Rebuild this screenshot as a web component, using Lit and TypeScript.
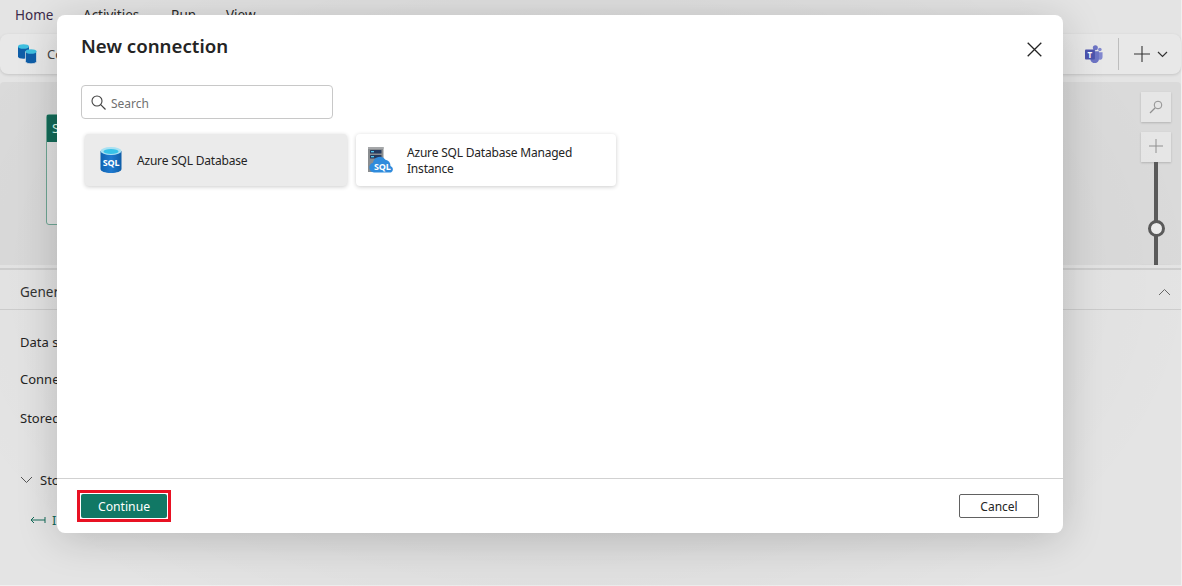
import { LitElement, html, css, svg } from "lit";
import { customElement } from "lit/decorators.js";

const sqlIcon = svg`<svg width="24" height="28" viewBox="0 0 24 28">
  <defs>
    <linearGradient id="sqlc" x1="0" x2="1" y1="0" y2="0"><stop offset="0" stop-color="#0f62b0"/><stop offset="0.5" stop-color="#1f7ad0"/><stop offset="1" stop-color="#0f5ea8"/></linearGradient>
  </defs>
  <path d="M1.500 5v18c0 2.400 4.700 4 10.500 4s10.500-1.600 10.500-4V5z" fill="url(#sqlc)"/>
  <ellipse cx="12" cy="5" rx="10.500" ry="4" fill="#a9e1f2"/>
  <ellipse cx="12" cy="5.500" rx="7.500" ry="2.600" fill="#37c2e8"/>
  <text x="12" y="19.500" text-anchor="middle" font-family="'Noto Sans',sans-serif" font-size="9" font-weight="700" fill="#fff">SQL</text>
</svg>`;

const miIcon = svg`<svg width="28" height="28" viewBox="0 0 28 28">
  <rect x="1" y="1" width="15.500" height="25" fill="#8a8d90"/>
  <rect x="1" y="1" width="15.500" height="2" fill="#a5a7a9"/>
  <rect x="3" y="4" width="11.500" height="3.500" rx=".6" fill="#243a5e"/>
  <rect x="3" y="9" width="11.500" height="3.500" rx=".6" fill="#243a5e"/>
  <rect x="4" y="5" width="3" height="1.300" fill="#50c8f0"/>
  <rect x="4" y="10" width="3" height="1.300" fill="#50c8f0"/>
  <path d="M7 26.500a5 5 0 0 1-1-9.800 7 7 0 0 1 12.500-3 6 6 0 0 1 5 6.200 3.600 3.600 0 0 1 .5 6.600z" fill="#2f8bdc"/>
  <text x="15.300" y="23.800" text-anchor="middle" font-family="'Noto Sans',sans-serif" font-size="9" font-weight="700" fill="#fff">SQL</text>
</svg>`;

const dbToolbarIcon = svg`<svg width="20" height="20" viewBox="0 0 20 20">
  <path d="M0 2.500v10c0 1.300 2.500 2.300 5.500 2.300S11 13.800 11 12.500v-10z" fill="#0f5ea8"/>
  <ellipse cx="5.500" cy="2.500" rx="5.500" ry="2.300" fill="#3fc0e0"/>
  <path d="M7.500 7.500v10c0 1.300 2.500 2.300 5.500 2.300s5.500-1 5.500-2.300v-10z" fill="#0f5ea8" stroke="#e6e6e6" stroke-width=".7"/>
  <ellipse cx="13" cy="7.500" rx="5.500" ry="2.300" fill="#3fc0e0"/>
</svg>`;

const teamsIcon = svg`<svg width="18" height="18" viewBox="0 0 20 20">
  <circle cx="11.500" cy="3" r="2.800" fill="#6d74c4"/>
  <circle cx="16.500" cy="5" r="2" fill="#8288cf"/>
  <path d="M14 8h5.500v5.500a3 3 0 0 1-5.500 1.600z" fill="#8288cf"/>
  <path d="M6 7h9.500v8.500a4.700 4.700 0 0 1-9.500 0z" fill="#6d74c4"/>
  <rect x="0" y="5" width="11" height="11" rx="1" fill="#4c53ad"/>
  <text x="5.500" y="14" text-anchor="middle" font-family="'Noto Sans',sans-serif" font-size="9" font-weight="700" fill="#fff">T</text>
</svg>`;

@customElement("app-root")
export class AppRoot extends LitElement {
  static styles = css`
    :host {
      display: block;
      position: relative;
      width: 1182px;
      height: 586px;
      overflow: hidden;
      font-family: "Noto Sans", "Open Sans", sans-serif;
      color: #242424;
      background: #e4e4e4;
    }
    .page { display: flex; flex-direction: column; height: 586px; box-sizing: border-box; border-right: 1px solid #f0f0f0; border-bottom: 1px solid #f0f0f0; background: #e4e4e4; }
    .tabs { display: flex; height: 30px; padding: 0 0 0 15px; align-items: center; font-size: 13.500px; color: #2a2a2a; flex: none; }
    .tabs span { width: 68px; flex: none; }
    .tabs span:first-child { color: #3c2a4a; }
    .tabs span:nth-child(2) { width: 88px; }
    .tabs span:nth-child(3) { width: 55px; }
    .toolbar { flex: none; height: 40px; margin-top: 4px; background: #e8e8e8; border-radius: 8px; box-shadow: 0 1px 3px rgba(0,0,0,.14); display: flex; align-items: center; padding: 0 13px 0 18px; }
    .toolbar .label { font-size: 13px; margin-left: 9px; color: #444; }
    .spacer { flex: 1; }
    .sep { width: 1px; height: 32px; background: #bdbdbd; margin: 0 15px 0 15px; }
    .canvas { flex: none; height: 183px; margin-top: 8px; background: #dadada; border-radius: 4px 4px 0 0; position: relative; display: flex; justify-content: flex-end; padding: 10px 10px 0 0; box-sizing: border-box; overflow: hidden; }
    .node { position: absolute; left: 46px; top: 32px; width: 100px; height: 111px; border: 1px solid #6fa795; border-radius: 3px; box-sizing: border-box; background: #e2e2e2; }
    .node .head { height: 27px; background: #136a58; color: #dfe; font-size: 13px; padding-left: 5px; line-height: 27px; }
    .zoom { display: flex; flex-direction: column; align-items: center; width: 30px; }
    .zbtn { width: 30px; height: 30px; flex: none; background: #e6e6e6; box-shadow: 0 1px 2px rgba(0,0,0,.18); display: flex; align-items: center; justify-content: center; }
    .zbtn.second { margin-top: 10px; }
    .zbtn.second svg { margin-top: -2px; }
    .track { width: 4px; height: 60px; background: #5a5a5a; flex: none; }
    .track.b { height: 30px; }
    .thumb { width: 11px; height: 11px; border: 3px solid #5a5a5a; border-radius: 50%; background: #ececec; flex: none; margin: -2px 0; position: relative; }
    .panel { flex: 1; margin-top: 3px; border-top: 2px solid #cfcfcf; min-height: 0; }
    .phead { height: 40px; box-sizing: border-box; border-bottom: 1px solid #cdcdcd; display: flex; align-items: center; justify-content: space-between; padding: 4px 10px 0 20px; font-size: 13.500px; color: #333; }
    .pbody { padding: 23px 0 0 20px; font-size: 13px; color: #242424; font-weight: 400; }
    .row { height: 19px; line-height: 19px; margin-bottom: 18px; }
    .row.third { margin-top: 20px; }
    .store { display: flex; align-items: center; gap: 7px; margin-top: 42px; height: 19px; }
    .input { display: flex; align-items: center; gap: 6px; margin: 22px 0 0 10px; color: #136a58; }

    .veil { position: absolute; inset: 0; background: radial-gradient(ellipse 640px 420px at 560px 275px, rgba(0,0,0,.08), rgba(0,0,0,0) 100%); pointer-events: none; }
    .dialog { position: absolute; left: 57px; top: 15px; width: 1006px; height: 518px; background: #fff; border-radius: 8px; box-shadow: 0 6px 40px rgba(0,0,0,.18); display: flex; flex-direction: column; }
    .dhead { display: flex; justify-content: space-between; align-items: flex-start; padding: 17px 21px 0 24px; height: 70px; box-sizing: border-box; flex: none; }
    h1 { margin: 0; font-size: 18.700px; font-weight: 600; line-height: 27px; color: #242424; }
    .close { margin-top: 10px; display: block; }
    .search { margin-left: 24px; width: 252px; height: 34px; box-sizing: border-box; border: 1px solid #c8c8c8; border-radius: 4px; display: flex; align-items: center; padding-left: 9px; gap: 5px; font-size: 12px; color: #707070; flex: none; }
    .search span { padding-top: 2px; }
    .cards { display: flex; gap: 9px; margin: 15px 0 0 28px; flex: none; }
    .card { width: 262px; height: 52px; box-sizing: border-box; border-radius: 4px; box-shadow: 0 1px 4px rgba(0,0,0,.2); display: flex; align-items: center; background: #fff; font-size: 12px; letter-spacing: -.2px; line-height: 16px; color: #242424; }
    .card span { padding-top: 2px; }
    .card.sel { background: #ebebeb; }
    .card.sel svg { margin-left: 14px; margin-right: 14px; }
    .card.mi { width: 260px; }
    .card.mi svg { margin-left: 11px; margin-right: 12px; }
    .grow { flex: 1; }
    .dfoot { flex: none; height: 55px; border-top: 1px solid #d1d1d1; display: flex; align-items: center; justify-content: space-between; padding: 0 24px 0 20px; box-sizing: border-box; }
    .hl { border: 3px solid #e81123; padding: 1px; display: flex; }
    .continue { width: 86px; height: 24px; background: #117865; color: #fff; border: none; border-radius: 2px; font: 400 12.200px "Noto Sans", sans-serif; padding: 0; }
    .cancel { width: 80px; height: 24px; background: #fff; color: #242424; border: 1px solid #616161; border-radius: 2px; font: 400 12px "Noto Sans", sans-serif; padding: 0; }
  `;

  render() {
    return html`
      <div class="page">
        <div class="tabs"><span>Home</span><span>Activities</span><span>Run</span><span>View</span></div>
        <div class="toolbar">
          ${dbToolbarIcon}<span class="label">Copy</span>
          <span class="spacer"></span>
          ${teamsIcon}
          <span class="sep"></span>
          <svg width="16" height="16" viewBox="0 0 16 16"><path d="M8 0v16M0 8h16" stroke="#333" stroke-width="1.100"/></svg>
          <svg style="margin-left:7px" width="11" height="7" viewBox="0 0 11 7"><path d="M1 1l4.500 4.500L10 1" fill="none" stroke="#333" stroke-width="1.200"/></svg>
        </div>
        <div class="canvas">
          <div class="node"><div class="head">S</div></div>
          <div class="zoom">
            <div class="zbtn"><svg width="14" height="14" viewBox="0 0 14 14"><circle cx="9" cy="5" r="3.800" fill="none" stroke="#909090"/><path d="M6 8l-5 5" stroke="#909090" stroke-width="1.200"/></svg></div>
            <div class="zbtn second"><svg width="16" height="16" viewBox="0 0 16 16"><path d="M8 1v14M1 8h14" stroke="#909090"/></svg></div>
            <div class="track"></div><div class="thumb"></div><div class="track b"></div>
            <div class="zbtn"></div>
          </div>
        </div>
        <div class="panel">
          <div class="phead"><span>General</span>
            <svg width="13" height="8" viewBox="0 0 13 8"><path d="M1 7l5.500-5.500L12 7" fill="none" stroke="#666"/></svg>
          </div>
          <div class="pbody">
            <div class="row">Data store</div>
            <div class="row">Connection</div>
            <div class="row third">Stored</div>
            <div class="store"><svg width="13" height="8" viewBox="0 0 13 8"><path d="M1 1l5.500 5.500L12 1" fill="none" stroke="#555"/></svg>Stored</div>
            <div class="input"><svg width="16" height="8" viewBox="0 0 16 8"><path d="M1 4h14M4 1L1 4l3 3M15 1v6" fill="none" stroke="#136a58"/></svg>Input</div>
          </div>
        </div>
      </div>
      <div class="veil"></div>
      <div class="dialog">
        <div class="dhead">
          <h1>New connection</h1>
          <svg class="close" width="15" height="15" viewBox="0 0 15 15"><path d="M.7.700l13.600 13.600M14.300.700L.7 14.300" stroke="#242424" stroke-width="1.300"/></svg>
        </div>
        <div class="search">
          <svg width="15" height="15" viewBox="0 0 15 15"><circle cx="6" cy="6" r="5" fill="none" stroke="#424242" stroke-width="1.100"/><path d="M9.700 9.700l4.800 4.800" stroke="#424242" stroke-width="1.200"/></svg>
          <span>Search</span>
        </div>
        <div class="cards">
          <div class="card sel">${sqlIcon}<span>Azure SQL Database</span></div>
          <div class="card mi">${miIcon}<span>Azure SQL Database Managed<br>Instance</span></div>
        </div>
        <div class="grow"></div>
        <div class="dfoot">
          <div class="hl"><button class="continue">Continue</button></div>
          <button class="cancel">Cancel</button>
        </div>
      </div>
    `;
  }
}
